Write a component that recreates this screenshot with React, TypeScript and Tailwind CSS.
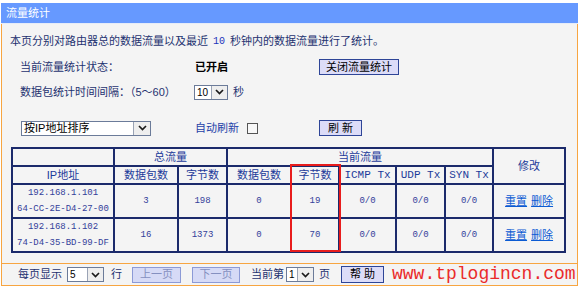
import React from 'react';

// Traffic statistics page (router admin style)

const NAVY = 'border-[#1b2a6b]';

function Chevron() {
  return (
    <svg width="9" height="6" viewBox="0 0 9 6">
      <path d="M1 1l3.5 3.5L8 1" stroke="#1a1a1a" strokeWidth="1.7" fill="none" />
    </svg>
  );
}

function FakeSelect({ width, value }: { width: string; value: string }) {
  return (
    <div className={`flex h-[15px] border border-[#6b7b99] bg-white ${width}`}>
      <span className="flex-1 pl-[2px] text-[10px] leading-[13px] text-black">{value}</span>
      <span className="flex w-[16px] items-center justify-center border-l border-[#9aa3b5] bg-[#eeeeee]">
        <Chevron />
      </span>
    </div>
  );
}

function Btn({ children, className = '', disabled = false }: { children: React.ReactNode; className?: string; disabled?: boolean }) {
  return (
    <div
      className={`flex h-[16px] items-center justify-center border text-[11px] leading-none ${
        disabled ? 'border-[#8c9ad6] bg-[#d6daf6] text-[#8590c0]' : 'border-[#2e4597] bg-[#dcdcf8] text-black'
      } ${className}`}
    >
      {children}
    </div>
  );
}

const rows = [
  { ip: '192.168.1.101', mac: '64-CC-2E-D4-27-00', pk: '3', bytes: '198', cpk: '0', cbytes: '19' },
  { ip: '192.168.1.102', mac: '74-D4-35-BD-99-DF', pk: '16', bytes: '1373', cpk: '0', cbytes: '70' },
];

export default function App() {
  const th = `border-2 ${NAVY} text-center font-normal text-[#1c3b9a] text-[11px] leading-none`;
  const td = `border-2 ${NAVY} text-center text-[#33409a] font-['Liberation_Mono',monospace] text-[9px] leading-[16px]`;

  return (
    <div className="relative h-[288px] w-[580px] overflow-hidden bg-white font-['Liberation_Sans','Noto_Sans_CJK_SC',sans-serif] text-[11px] text-[#1e3270]">
      <div className="ml-[1px] w-[577px] pt-[3px]">
        {/* title bar */}
        <div className="flex h-[20px] items-center bg-[#6699ff] pl-[5px] text-[11px] text-white">流量统计</div>
        <div className="h-[1px] bg-[#e6ecf8]" />

        {/* main panel */}
        <div className="h-[239px] border-x border-[#f7a541] bg-[#f4f4f4] pt-[9px]">
          <div className="flex h-[16px] items-center pl-[8px]">
            本页分别对路由器总的数据流量以及最近
            <span className="mx-[5px] font-['Liberation_Mono',monospace] text-[10px] text-[#2233bb]">10</span>
            秒钟内的数据流量进行了统计。
          </div>

          <div className="mt-[9px] flex h-[18px] items-center pl-[18px]">
            <span className="w-[175px]">当前流量统计状态：</span>
            <span className="w-[124px] font-bold text-black">已开启</span>
            <Btn className="w-[80px]">关闭流量统计</Btn>
          </div>

          <div className="mt-[7px] flex h-[18px] items-center pl-[18px]">
            <span className="w-[174px]">数据包统计时间间隔：（5～60）</span>
            <FakeSelect width="w-[34px]" value="10" />
            <span className="ml-[5px]">秒</span>
          </div>

          <div className="mt-[18px] flex h-[18px] items-center pl-[19px]">
            <div className="w-[174px]">
              <div className="flex h-[15px] w-[130px] border border-[#6b7b99] bg-white">
                <span className="flex-1 pl-[2px] text-[11px] leading-[13px] text-black">按IP地址排序</span>
                <span className="flex w-[17px] items-center justify-center border-l border-[#9aa3b5] bg-[#eeeeee]">
                  <Chevron />
                </span>
              </div>
            </div>
            <span className="text-[#2541a8]">自动刷新</span>
            <span className="ml-[8px] h-[11px] w-[11px] border border-[#555] bg-[#f8f8f8]" />
            <div className="ml-[61px]">
              <Btn className="w-[43px]">刷&nbsp;新</Btn>
            </div>
          </div>

          {/* table */}
          <div className="relative ml-[9px] mt-[10px] w-[555px]">
            <table className="w-[555px] table-fixed border-collapse">
              <colgroup>
                <col className="w-[102px]" />
                <col className="w-[64px]" />
                <col className="w-[49px]" />
                <col className="w-[64px]" />
                <col className="w-[48px]" />
                <col className="w-[57px]" />
                <col className="w-[49px]" />
                <col className="w-[48px]" />
                <col className="w-[72px]" />
              </colgroup>
              <thead>
                <tr className="h-[18px]">
                  <th className={th}></th>
                  <th className={th} colSpan={2}>总流量</th>
                  <th className={th} colSpan={5}>当前流量</th>
                  <th className={th} rowSpan={2}>修改</th>
                </tr>
                <tr className="h-[18px]">
                  <th className={th}>IP地址</th>
                  <th className={th}>数据包数</th>
                  <th className={th}>字节数</th>
                  <th className={th}>数据包数</th>
                  <th className={th}>字节数</th>
                  <th className={`${th} font-['Liberation_Mono',monospace] text-[9px]`}>ICMP Tx</th>
                  <th className={`${th} font-['Liberation_Mono',monospace] text-[9px]`}>UDP Tx</th>
                  <th className={`${th} font-['Liberation_Mono',monospace] text-[9px]`}>SYN Tx</th>
                </tr>
              </thead>
              <tbody>
                {rows.map((r) => (
                  <tr key={r.ip} className="h-[34px]">
                    <td className={td}>
                      <div>{r.ip}</div>
                      <div>{r.mac}</div>
                    </td>
                    <td className={td}>{r.pk}</td>
                    <td className={td}>{r.bytes}</td>
                    <td className={td}>{r.cpk}</td>
                    <td className={td}>{r.cbytes}</td>
                    <td className={td}>0/0</td>
                    <td className={td}>0/0</td>
                    <td className={td}>0/0</td>
                    <td className={`border-2 ${NAVY} text-center text-[11px] text-[#0b5bd3]`}>
                      <span className="underline">重置</span>
                      <span className="ml-[4px] underline">删除</span>
                    </td>
                  </tr>
                ))}
              </tbody>
            </table>
            {/* red highlight box */}
            <div className="pointer-events-none absolute left-[279px] top-[17px] h-[88px] w-[51px] border-2 border-[#e81c1c]" />
          </div>
        </div>

        {/* bottom paging bar */}
        <div className="flex h-[23px] items-center border border-[#f7a541] bg-[#f4f4f4] pl-[16px]">
          <span>每页显示</span>
          <div className="ml-[5px]">
            <FakeSelect width="w-[37px]" value="5" />
          </div>
          <span className="ml-[7px]">行</span>
          <Btn disabled className="ml-[10px] w-[49px]">上一页</Btn>
          <Btn disabled className="ml-[11px] w-[48px]">下一页</Btn>
          <span className="ml-[11px]">当前第</span>
          <div className="ml-[2px]">
            <FakeSelect width="w-[28px]" value="1" />
          </div>
          <span className="ml-[5px]">页</span>
          <Btn className="ml-[11px] h-[17px] w-[43px]">帮&nbsp;助</Btn>
        </div>
      </div>

      {/* watermark */}
      <div className="pointer-events-none absolute left-[392px] top-[263px] font-['Liberation_Mono',monospace] text-[18px] leading-[22px] text-[#ea2b2b]">
        www.tplogincn.com
      </div>
    </div>
  );
}
